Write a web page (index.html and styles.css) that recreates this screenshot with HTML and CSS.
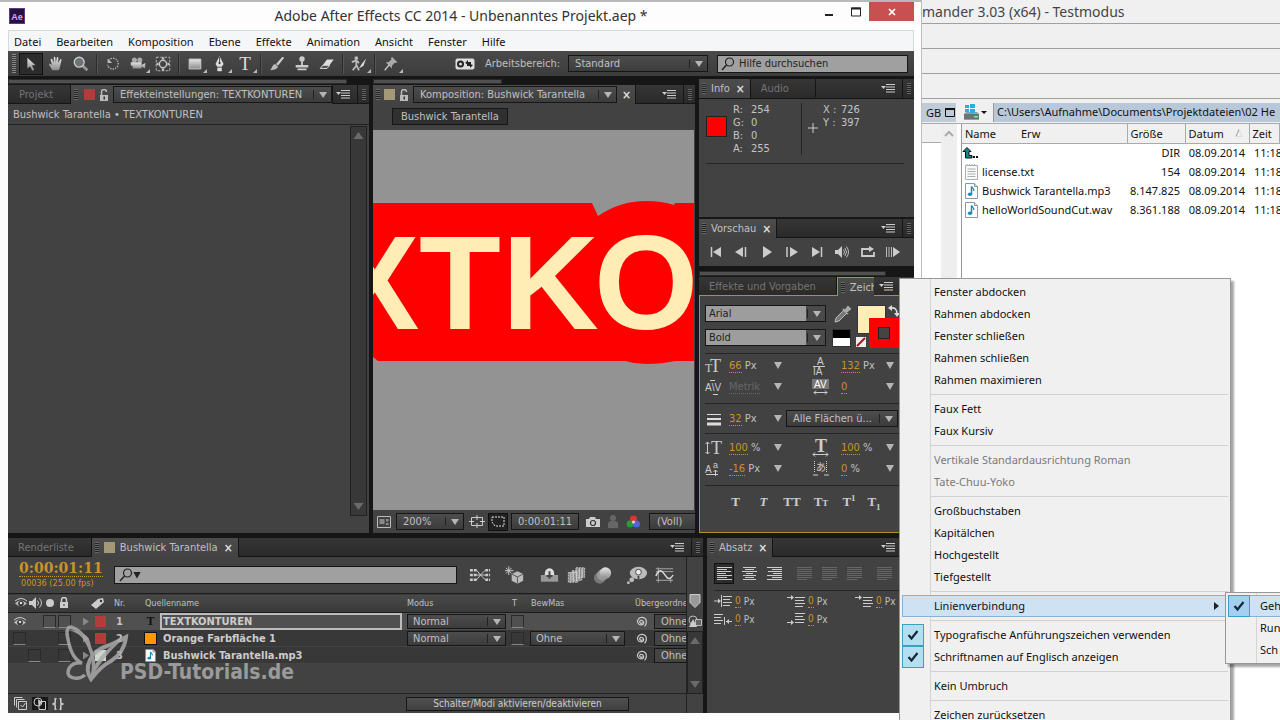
FILE: index.html
```html
<!DOCTYPE html>
<html lang="de">
<head>
<meta charset="utf-8">
<title>Adobe After Effects CC 2014 - Unbenanntes Projekt.aep *</title>
<link rel="stylesheet" href="styles.css">
</head>
<body>
<svg class="defs" aria-hidden="true">
  <defs>
    <linearGradient id="metal" x1="0" y1="0" x2="0" y2="1"><stop offset="0" stop-color="#e6e6e6"/><stop offset="1" stop-color="#8c8c8c"/></linearGradient>
    <symbol id="menu" viewBox="0 0 14 9"><path d="M0 2h5L2.500 5z" fill="#ccc"/><path d="M5 .5h9M5 3h9M5 5.500h9M5 8h9" stroke="#ccc"/></symbol>
    <symbol id="lock" viewBox="0 0 10 12"><path d="M2.500 6V3a2.500 2.500 0 0 1 5 0" fill="none" stroke="#bbb" stroke-width="1.500"/><path d="M1 6h8v6H1z" fill="#bbb"/><path d="M4.500 7.500h1.500v3H4.500z" fill="#333"/></symbol>
    <symbol id="lens" viewBox="0 0 14 14"><circle cx="8.500" cy="5" r="4" fill="none" stroke="#222" stroke-width="1.200"/><path d="M5.500 8L1 13" stroke="#222" stroke-width="1.500"/></symbol>
    <symbol id="spiral" viewBox="0 0 12 12"><path d="M6.500 6.500a1.500 1.500 0 1 1-1-2.200c2.500 0 3 4.200.5 4.400C1.500 9.500.5 5 2.500 2.800 4.500.5 9 .8 10 3.800c.8 2.800-.2 5.200-1.500 6.500" fill="none" stroke="#ccc" stroke-width="1.200"/></symbol>
    <symbol id="eye" viewBox="0 0 14 10"><path d="M1 5.500Q6-.5 13 5.500 7 11 1 5.500z" fill="#bbb"/><circle cx="7" cy="5.500" r="2.800" fill="#333"/><circle cx="7" cy="5" r="1.300" fill="#ddd"/><path d="M1 3Q7-2 13 3" fill="none" stroke="#ccc"/></symbol>
    <symbol id="note" viewBox="0 0 13 16"><path d="M.5.500h9l3 3v12H.5z" fill="#fff" stroke="#8a98a2"/><path d="M9.500.5v3h3" fill="#ddd" stroke="#8a98a2"/><path d="M6.500 3.500v7.500" stroke="#168ac0" stroke-width="1.500"/><ellipse cx="5" cy="11.300" rx="2.200" ry="1.700" fill="#168ac0"/><path d="M6.500 3.500c.5 2 3 2 2.200 4.500" fill="none" stroke="#168ac0" stroke-width="1.300"/></symbol>
    <symbol id="check" viewBox="0 0 12 12"><path d="M1.500 6l3 3.500L10.500 2" fill="none" stroke="#16283a" stroke-width="2.200"/></symbol>
    <symbol id="al" viewBox="0 0 15 14"><path d="M0 .5h15M0 2.500h10M0 4.500h14M0 6.500h9M0 8.500h15M0 10.500h10M0 12.500h15" stroke="currentColor"/></symbol>
    <symbol id="ac" viewBox="0 0 15 14"><path d="M1 .5h13M3 2.500h9M0 4.500h15M4 6.500h7M1 8.500h13M3 10.500h9M1 12.500h13" stroke="currentColor"/></symbol>
    <symbol id="ar" viewBox="0 0 15 14"><path d="M0 .5h15M5 2.500h10M1 4.500h14M6 6.500h9M0 8.500h15M5 10.500h10M0 12.500h15" stroke="currentColor"/></symbol>
    <symbol id="aj" viewBox="0 0 15 14"><path d="M0 .5h15M0 2.500h15M0 4.500h15M0 6.500h15M0 8.500h15M0 10.500h15M0 12.500h10" stroke="currentColor"/></symbol>
    <symbol id="indent" viewBox="0 0 18 12"><path d="M0 6h6M7.500 0v12M9 1.500h9M9 4.500h7M9 7.500h9M9 10.500h7" stroke="#ccc"/><path d="M4 3.500L7 6 4 8.500z" fill="#ccc"/></symbol>
    <symbol id="indent2" viewBox="0 0 18 12"><path d="M0 2.500h5M8 2.500h10M8 5.500h9M8 8.500h10M8 11.500h8" stroke="#ccc"/><path d="M4 0l3 2.500L4 5z" fill="#ccc"/></symbol>
  </defs>
</svg>

<div class="desktop">
<main class="ae">
  <header class="ae-title">
    <svg class="ae-logo" viewBox="0 0 16 16"><rect x=".5" y=".5" width="15" height="15" fill="#27123f" stroke="#5b3a83"/><text x="8" y="11.500" text-anchor="middle">Ae</text></svg>
    <h1>Adobe After Effects CC 2014 - Unbenanntes Projekt.aep *</h1>
    <div class="caption">
      <button aria-label="Minimieren"><svg viewBox="0 0 12 12"><path d="M2 9h8" stroke="#222" stroke-width="2"/></svg></button>
      <button aria-label="Maximieren"><svg viewBox="0 0 12 12"><path d="M1.500 2v8h9V2z" fill="none" stroke="#222"/><path d="M1 2.500h10" stroke="#222" stroke-width="2"/></svg></button>
      <button class="close" aria-label="Schließen"><svg viewBox="0 0 12 12"><path d="M3 3l6 6M9 3L3 9" stroke="#fff" stroke-width="1.700"/></svg></button>
    </div>
  </header>
  <nav class="menubar">
    <button>Datei</button><button>Bearbeiten</button><button>Komposition</button><button>Ebene</button><button>Effekte</button><button>Animation</button><button>Ansicht</button><button>Fenster</button><button>Hilfe</button>
  </nav>
  <div class="app">
    <div class="toolbar">
      <i class="grip tall"></i>
      <button class="tool on" aria-label="Auswahl"><svg viewBox="0 0 20 20"><path d="M6 3v12l3-2.500 2.500 5 2-1-2.500-5h4z" fill="url(#metal)"/></svg></button>
      <button class="tool" aria-label="Hand"><svg viewBox="0 0 20 20"><path d="M6 17C4 13 2 11 2.500 10s2 0 3 1.500L4 5c0-1 1.500-1 2 0l1.500 4L7.500 3c0-1.300 1.700-1.300 1.800 0l.5 6 1-6c.2-1.200 1.900-1 1.800.2L12.300 9l2.200-4c.6-1 2-.3 1.600.8C15 9 15 14 13 17z" fill="url(#metal)"/></svg></button>
      <button class="tool" aria-label="Zoom"><svg viewBox="0 0 20 20"><path d="M11 11l6 6" stroke="#999" stroke-width="3"/><circle cx="8" cy="8" r="5.500" fill="#6d7478" stroke="#ccc" stroke-width="1.500"/></svg></button>
      <i class="tsep"></i>
      <button class="tool" aria-label="Drehen"><svg viewBox="0 0 20 20"><path d="M5 6a6 6 0 1 1-1 5" fill="none" stroke="#bbb" stroke-width="1.500" stroke-dasharray="1.500 1.300"/><path d="M4 4v5h5z" fill="#bbb"/></svg></button>
      <button class="tool more" aria-label="Kamera"><svg viewBox="0 0 20 20"><circle cx="6" cy="5.500" r="2.800" fill="#aaa"/><circle cx="12" cy="5.500" r="2.800" fill="#aaa"/><path d="M2 8h12v7H4v-3H2zM14 11l4-2v6l-4-2z" fill="url(#metal)"/></svg></button>
      <button class="tool" aria-label="Ausschnitt"><svg viewBox="0 0 20 20"><circle cx="10" cy="10" r="4" fill="none" stroke="#ccc" stroke-width="1.500"/><path d="M2.500 2.500h15v15h-15z" fill="none" stroke="#bbb" stroke-dasharray="3 1.500"/><path d="M10 2l2 3H8zM10 18l2-3H8zM2 10l3-2v4zM18 10l-3-2v4z" fill="#ccc"/></svg></button>
      <i class="tsep"></i>
      <button class="tool more" aria-label="Rechteck"><svg viewBox="0 0 20 20"><path d="M3.500 4.500h13v11h-13z" fill="url(#metal)" stroke="#ccc"/></svg></button>
      <button class="tool more" aria-label="Zeichenstift"><svg viewBox="0 0 20 20"><path d="M9.500 1L14 10l-2 3H7l-2-3z" fill="#ddd"/><path d="M9.500 2v7" stroke="#444"/><circle cx="9.500" cy="9" r="1.200" fill="#333"/><path d="M7 14h5v4H7z" fill="#ddd"/></svg></button>
      <button class="tool more glyph" aria-label="Text">T</button>
      <i class="tsep"></i>
      <button class="tool" aria-label="Pinsel"><svg viewBox="0 0 20 20"><path d="M16 2l-7 8 2 2 7-9z" fill="#ccc"/><path d="M8 10l3 3c-2 4-5 3-9 4 3-2 2-6 6-7z" fill="#bbb"/></svg></button>
      <button class="tool" aria-label="Stempel"><svg viewBox="0 0 20 20"><circle cx="10" cy="4.500" r="3" fill="#ccc"/><path d="M9 7h2v4h6v3H3v-3h6zM5 15h10v2H5z" fill="#ccc"/></svg></button>
      <button class="tool" aria-label="Radiergummi"><svg viewBox="0 0 20 20"><path d="M10 5h7.500l-7.500 10H2.500z" fill="#ddd"/><path d="M2.500 15l2.800-3.500H13L10 15z" fill="#555" stroke="#ddd"/></svg></button>
      <i class="tsep"></i>
      <button class="tool more" aria-label="Roto-Pinsel"><svg viewBox="0 0 20 20"><circle cx="7" cy="3.500" r="2" fill="#bbb"/><path d="M2 8l5-2 3 3M7 6v6l-4 5M7 11l3 6" fill="none" stroke="#bbb" stroke-width="2"/><path d="M18 4l-5 6-3 5 5-3z" fill="#ddd"/></svg></button>
      <i class="tsep gap"></i>
      <button class="tool more" aria-label="Marionette"><svg viewBox="0 0 20 20"><path d="M11 2l6 6-2 1-1-.5-3 3.500 0 3-7-7h3L10.500 5 10 4z" fill="#aaa"/><path d="M8 11l-5 6" stroke="#ccc" stroke-width="1.500"/></svg></button>
      <span class="ws">
        <svg viewBox="0 0 20 12" width="20" height="12"><rect x=".5" y=".5" width="19" height="11" rx="2" fill="#ddd"/><circle cx="5.500" cy="6" r="2.500" fill="none" stroke="#222" stroke-width="2"/><path d="M10 5l3-3v2h3v4M18 7l-3 3V8h-3V5" fill="#222"/></svg>
        <label for="ws">Arbeitsbereich:</label>
      </span>
      <span class="sel wsel"><select id="ws"><option>Standard</option></select></span>
      <label class="help"><svg width="14" height="14"><use href="#lens"/></svg><input type="text" value="Hilfe durchsuchen" aria-label="Hilfe durchsuchen"></label>
    </div>

    <div class="upper">
      <section class="col">
        <div class="hbar"><i class="thumb left-thumb"></i></div>
        <div class="tabs">
          <button class="tab off proj">Projekt</button>
          <div class="tab act fx"><i class="grip"></i><i class="chip red"></i><svg width="10" height="12"><use href="#lock"/></svg><span class="sel bare"><select aria-label="Effekteinstellungen"><option>Effekteinstellungen: TEXTKONTUREN</option></select></span></div>
          <span class="tabend"><svg width="14" height="9"><use href="#menu"/></svg></span><span class="endgrip"><i class="grip"></i></span>
        </div>
        <div class="pbody fxbody">
          <p class="crumb">Bushwick Tarantella • TEXTKONTUREN</p>
          <div class="fxarea"><div class="scroll"><i class="tri up"></i><i class="tri"></i></div></div>
        </div>
      </section>

      <section class="col">
        <div class="hbar"><i class="thumb comp-thumb"></i></div>
        <div class="tabs">
          <div class="tab act compt"><i class="grip"></i><i class="chip sand"></i><svg width="10" height="12"><use href="#lock"/></svg><span class="sel bare"><select aria-label="Komposition"><option>Komposition: Bushwick Tarantella</option></select></span><b class="x">×</b></div>
          <span class="tabend"><svg width="14" height="9"><use href="#menu"/></svg></span><span class="endgrip"><i class="grip"></i></span>
        </div>
        <div class="pbody">
          <div class="compcrumb"><button>Bushwick Tarantella</button></div>
          <div class="viewer">
            <svg viewBox="0 0 321 380" preserveAspectRatio="xMidYMid slice">
              <path d="M0 73H219L225 86Q247 71 273 71Q289 71 301 75L302 73H330V231H302Q289 234 273 234Q262 234 252 231H5L0 227z" fill="#fe0000"/>
              <text x="-43 46 129 221" y="199">XTKO</text>
            </svg>
          </div>
          <div class="vfoot">
            <svg width="14" height="12" viewBox="0 0 14 12"><path d="M.5.500h13v11H.5z" fill="none" stroke="#bbb"/><path d="M2.500 3h5v5h-5zM9 3h2.500v2.500H9zM9 7h2.500v2H9z" fill="#888"/></svg>
            <span class="sel zoomsel"><select aria-label="Zoom"><option>200%</option></select></span>
            <svg width="16" height="14" viewBox="0 0 16 14"><path d="M2.500 2.500h11v8h-11zM8 0v5M8 8v5M0 6.500h5M11 6.500h5" fill="none" stroke="#ccc"/></svg>
            <button class="maskbtn" aria-label="Maske"><svg width="14" height="11" viewBox="0 0 14 11"><path d="M1 1h12v9H4L1 6z" fill="none" stroke="#ddd" stroke-dasharray="2 1"/></svg></button>
            <button class="box time">0:00:01:11</button>
            <svg width="14" height="12" viewBox="0 0 14 12"><path d="M0 3h3l1-2h5l1 2h4v8H0z" fill="#ccc"/><circle cx="7" cy="7" r="2.500" fill="#ccc" stroke="#333" stroke-width="1.200"/></svg>
            <svg width="12" height="13" viewBox="0 0 12 13"><circle cx="6" cy="3" r="3" fill="#666"/><path d="M1 13V8l2-2h6l2 2v5z" fill="#666"/></svg>
            <svg width="16" height="14" viewBox="0 0 16 14"><circle cx="7.500" cy="4" r="3.500" fill="#d33"/><circle cx="4" cy="9" r="3.500" fill="#2a9a3a"/><circle cx="10.500" cy="9" r="3.500" fill="#5564d8"/><circle cx="7.500" cy="7" r="1.500" fill="#ddd"/></svg>
            <button class="box voll">(Voll)</button>
          </div>
        </div>
      </section>

      <section class="col right">
        <div class="tabs info-tabs">
          <div class="tab act"><i class="grip"></i>Info<b class="x">×</b></div>
          <button class="tab off audio">Audio</button>
          <span class="tabend"><svg width="14" height="9"><use href="#menu"/></svg></span><span class="endgrip"><i class="grip"></i></span>
        </div>
        <div class="pbody info">
          <div class="inforow">
            <i class="colour"></i>
            <dl><dt>R:</dt><dd>254</dd><dt>G:</dt><dd>0</dd><dt>B:</dt><dd>0</dd><dt>A:</dt><dd>255</dd></dl>
            <div class="xy"><svg width="10" height="10" viewBox="0 0 10 10"><path d="M5 0v10M0 5h10" stroke="#ccc"/></svg><dl><dt>X :</dt><dd>726</dd><dt>Y :</dt><dd>397</dd></dl></div>
          </div>
        </div>
        <div class="tabs prev-tabs">
          <div class="tab act"><i class="grip"></i>Vorschau<b class="x">×</b></div>
          <span class="tabend"><svg width="14" height="9"><use href="#menu"/></svg></span><span class="endgrip"><i class="grip"></i></span>
        </div>
        <div class="pbody preview">
          <button aria-label="Erstes Bild"><svg viewBox="0 0 16 12"><path d="M3.500 1v10" stroke="#ccc" stroke-width="1.500"/><path d="M13 1v10L5 6z" fill="#ccc"/></svg></button>
          <button aria-label="Zurück"><svg viewBox="0 0 16 12"><path d="M10 1v10L2 6z" fill="#ccc"/><path d="M12.500 1v10" stroke="#ccc" stroke-width="1.500"/></svg></button>
          <button aria-label="Abspielen"><svg viewBox="0 0 16 12"><path d="M4 0l9 6-9 6z" fill="#ccc"/></svg></button>
          <button aria-label="Vor"><svg viewBox="0 0 16 12"><path d="M3 1v10" stroke="#ccc" stroke-width="1.500"/><path d="M6 1v10l8-5z" fill="#ccc"/></svg></button>
          <button aria-label="Letztes Bild"><svg viewBox="0 0 16 12"><path d="M3 1v10l8-5z" fill="#ccc"/><path d="M12.500 1v10" stroke="#ccc" stroke-width="1.500"/></svg></button>
          <button aria-label="Ton"><svg viewBox="0 0 16 12"><path d="M1 4h3l4-4v12L4 8H1z" fill="#ccc"/><path d="M9.500 3.500q2 2.500 0 5M11 2q3 4 0 8M12.500.5q4 5.500 0 11" fill="none" stroke="#bbb"/></svg></button>
          <button aria-label="Schleife"><svg viewBox="0 0 16 12"><path d="M10 3H2v7h12V6" fill="none" stroke="#ccc" stroke-width="1.800"/><path d="M9 0l5 3-5 3z" fill="#ccc"/></svg></button>
          <button aria-label="RAM-Vorschau"><svg viewBox="0 0 16 12"><path d="M1.500 1v10M4 1v10M6.500 1v10" stroke="#bbb"/><path d="M8 1v10l7-5z" fill="#ccc"/></svg></button>
        </div>
        <div class="hbar low"><i class="thumb char-thumb"></i></div>
        <div class="tabs char-tabs">
          <button class="tab off">Effekte und Vorgaben</button>
          <div class="tab act gold"><i class="grip"></i>Zeich</div>
          <span class="tabend"><svg width="14" height="9"><use href="#menu"/></svg></span>
        </div>
        <div class="pbody char">
          <div class="fontrow">
            <div class="fonts">
              <span class="sel light"><select aria-label="Schriftart"><option>Arial</option></select></span>
              <span class="sel light"><select aria-label="Schriftschnitt"><option>Bold</option></select></span>
            </div>
            <div class="pick">
              <svg width="18" height="18" viewBox="0 0 18 18"><path d="M11 5l3 3-8 8-4 1 1-4z" fill="#777" stroke="#bbb"/><path d="M10 4l5 5M12 6l3-4 2 2-4 3z" fill="#aaa" stroke="#aaa" stroke-width="2"/></svg>
              <i class="bw"></i>
            </div>
            <div class="swatches"><i class="cream"></i><i class="stroke"></i>
              <svg class="swap" width="12" height="12" viewBox="0 0 12 12"><path d="M3 3q6-1 6 6" fill="none" stroke="#ddd" stroke-width="1.500"/><path d="M4 0v6L0 3zM6 8h6l-3 4z" fill="#ddd"/></svg>
              <svg class="none" width="10" height="10" viewBox="0 0 10 10"><path d="M0 0h10v10H0z" fill="#eee"/><path d="M1 9l8-8" stroke="#a01818" stroke-width="2"/></svg></div>
          </div>
          <div class="metrics two first">
            <svg viewBox="0 0 18 16"><text x="0" y="14" class="ser s12">T</text><text x="5" y="14" class="ser s16">T</text></svg><span><button class="hot">66</button> Px</span><i class="tri"></i>
            <svg viewBox="0 0 18 16"><text x="5" y="7" class="ic s10">A</text><text x="1" y="17" class="ic s10">IA</text><path d="M1 8.500h12" stroke="#ccc"/></svg><span><button class="hot">132</button> Px</span><i class="tri"></i>
            <svg viewBox="0 0 18 16"><text x="0" y="12" class="ic s10">A\V</text><path d="M5 1.500h5M8 15.500h5" stroke="#ccc"/></svg><span><button class="hot dim">Metrik</button></span><i class="tri"></i>
            <svg viewBox="0 0 18 16"><path d="M0 0h17v10H0z" fill="#777"/><text x="2" y="9" class="ic s10 lt">AV</text><path d="M2 13.500h13M4 11.500l-2 2 2 2M13 11.500l2 2-2 2" stroke="#ccc" fill="none"/></svg><span><button class="hot">0</button></span><i class="tri"></i>
          </div>
          <div class="metrics one">
            <svg viewBox="0 0 18 16"><path d="M2 3.500h14" stroke="#ddd"/><path d="M2 8h14" stroke="#ddd" stroke-width="2"/><path d="M2 13h14" stroke="#ddd" stroke-width="3"/></svg><span><button class="hot">32</button> Px</span><i class="tri"></i>
            <span class="sel fill"><select aria-label="Füllung"><option>Alle Flächen ü...</option></select></span>
          </div>
          <div class="metrics two">
            <svg viewBox="0 0 18 16"><path d="M2.500 2v12M.5 4l2-2 2 2M.5 12l2 2 2-2" stroke="#ccc" fill="none"/><text x="6" y="14" class="ser s16">T</text></svg><span><button class="hot">100</button> %</span><i class="tri"></i>
            <svg viewBox="0 0 18 16"><text x="3" y="12" class="ser s16 bold">T</text><path d="M1 14.500h15M3 12.500l-2 2 2 2M14 12.500l2 2-2 2" stroke="#ccc" fill="none"/></svg><span><button class="hot">100</button> %</span><i class="tri"></i>
            <svg viewBox="0 0 18 16"><text x="0" y="12" class="ic s10">A</text><text x="8" y="7" class="ic s9">a</text><path d="M1 13.500h12M10.500 15V9M8.500 11l2-2 2 2" stroke="#ccc" fill="none"/></svg><span><button class="hot">-16</button> Px</span><i class="tri"></i>
            <svg viewBox="0 0 18 16"><path d="M2.500 0v12M14.500 0v12" stroke="#ccc" stroke-dasharray="1 1"/><text x="4" y="10" class="jp">あ</text><path d="M1 14h5M12 14h5" stroke="#ccc"/></svg><span><button class="hot">0</button> %</span><i class="tri"></i>
          </div>
          <div class="styles"><button><b>T</b></button><button><i>T</i></button><button>TT</button><button>T<small>T</small></button><button>T<sup>1</sup></button><button>T<sub>1</sub></button></div>
        </div>
      </section>
    </div>

    <div class="lower">
      <section class="col timeline">
        <div class="tabs">
          <button class="tab off rl">Renderliste</button>
          <div class="tab act"><i class="grip"></i><i class="chip sand"></i>Bushwick Tarantella<b class="x">×</b></div>
          <span class="tabend"><svg width="14" height="9"><use href="#menu"/></svg></span><span class="endgrip"><i class="grip"></i></span>
        </div>
        <div class="pbody tl">
          <div class="tlmain">
            <div class="tlhead">
              <div class="tc"><button class="big">0:00:01:11</button><small>00036 (25.00 fps)</small></div>
              <label class="search"><svg width="14" height="14"><use href="#lens"/></svg><i class="tri"></i><input type="text" aria-label="Suchen"></label>
              <div class="tlicons">
                <svg viewBox="0 0 24 18"><path d="M1 4h7M1 9h7M1 14h7M17 4h5M17 9h5M17 14h5" stroke="#ccc" stroke-width="2.500" stroke-dasharray="3 1"/><path d="M8 4l4 5 5-5M8 14l4-5 5 5M8 9h9" stroke="#ccc" fill="none"/></svg>
                <svg viewBox="0 0 24 18"><path d="M5 0v9M1 4.500h9M2 1.500l6 6M8 1.500l-6 6" stroke="#ccc"/><path d="M8 8l6-3 6 3v7l-6 3-6-3z" fill="#bbb"/><path d="M8 8l6 3 6-3M14 11v7" stroke="#555" fill="none"/></svg>
                <svg class="wide" viewBox="0 0 24 18"><path d="M3 9h18v7H3z" fill="#999"/><path d="M7 9q0-7 5-7t5 7z" fill="#ddd"/><path d="M12 5v8M9 10h6" stroke="#444" stroke-width="2"/></svg>
                <svg viewBox="0 0 24 18"><path d="M3.500 6.500h10v10h-10zM7.500 4.500h10v10h-10zM11.500 1.500h9v10h-9z" fill="#888" stroke="#ccc" stroke-dasharray="2 1"/><path d="M6 6v11M9 5v11M12 5v10M15 2v11M18 2v9" stroke="#ccc"/></svg>
                <svg viewBox="0 0 24 18"><circle cx="8" cy="12" r="6" fill="#777"/><circle cx="11" cy="9" r="6" fill="#999"/><circle cx="14" cy="7" r="6" fill="url(#metal)"/></svg>
                <svg class="wide" viewBox="0 0 24 18"><ellipse cx="13" cy="7" rx="9" ry="6.500" fill="#bbb"/><circle cx="6" cy="14" r="2.500" fill="#bbb"/><circle cx="2.500" cy="17" r="1.500" fill="#bbb"/><circle cx="13" cy="6" r="3" fill="#eee" stroke="#444"/><path d="M12 10h2v3h-2z" fill="#444"/></svg>
                <svg viewBox="0 0 24 18"><path d="M3 2.500h18M3 5.500h18M3 14.500h18M5.500 1v16M18.500 12v5" stroke="#aaa"/><path d="M3 10q4-9 8-3l4 5q3 2 6-3" fill="none" stroke="#ddd" stroke-width="1.500"/></svg>
              </div>
            </div>
            <table class="layers">
              <colgroup><col class="c-sw"><col class="c-lab"><col class="c-nr"><col><col class="c-mode"><col class="c-t"><col class="c-mas"><col class="c-par"></colgroup>
              <thead><tr>
                <th><span class="sw"><svg width="14" height="10"><use href="#eye"/></svg><svg width="14" height="12" viewBox="0 0 14 12"><path d="M0 4h3l4-4v12L3 8H0z" fill="#ccc"/><path d="M8.500 3.500q2 2.500 0 5M10.500 1.500q4 4.500 0 9" fill="none" stroke="#ccc"/></svg><svg width="12" height="10" viewBox="0 0 12 10"><circle cx="6" cy="5" r="4" fill="#ccc"/></svg><svg width="10" height="12" viewBox="0 0 10 12"><path d="M2.500 6V3a2.500 2.500 0 0 1 5 0v3" fill="none" stroke="#ccc" stroke-width="1.500"/><path d="M1 5h8v6H1z" fill="#ccc"/><path d="M4.500 7h1v2h-1z" fill="#333"/></svg></span></th>
                <th><svg class="tag" width="15" height="13" viewBox="0 0 15 13"><path d="M1 8l7-6 5-1 1 4-8 7z" fill="#ccc"/><circle cx="11" cy="4" r="1.200" fill="#333"/></svg></th>
                <th>Nr.</th><th>Quellenname</th><th>Modus</th><th>T</th><th>BewMas</th><th>Übergeordnet</th>
              </tr></thead>
              <tbody>
                <tr class="seld">
                  <td><span class="sw"><svg width="14" height="10"><use href="#eye"/></svg><i></i><i class="cell"></i><i class="cell"></i></span></td>
                  <td><span class="lab"><i class="tri rt"></i><i class="chip red"></i></span></td><td>1</td>
                  <td><span class="name"><b class="tt">T</b><span class="nm edit">TEXTKONTUREN</span></span></td>
                  <td><span class="sel"><select aria-label="Modus 1"><option>Normal</option></select></span></td><td><i class="cell"></i></td><td></td>
                  <td><span class="par"><svg width="12" height="12"><use href="#spiral"/></svg><span class="ohne">Ohne</span></span></td>
                </tr>
                <tr>
                  <td><span class="sw"><i class="cell"></i><i></i><i></i><i class="cell"></i></span></td>
                  <td><span class="lab"><i class="tri rt"></i><i class="chip red"></i></span></td><td>2</td>
                  <td><span class="name"><i class="orange"></i><span class="nm">Orange Farbfläche 1</span></span></td>
                  <td><span class="sel"><select aria-label="Modus 2"><option>Normal</option></select></span></td><td><i class="cell"></i></td><td><span class="sel mas"><select aria-label="BewMas 2"><option>Ohne</option></select></span></td>
                  <td><span class="par"><svg width="12" height="12"><use href="#spiral"/></svg><span class="ohne">Ohne</span></span></td>
                </tr>
                <tr>
                  <td><span class="sw"><i></i><i class="cell"></i><i></i><i class="cell"></i></span></td>
                  <td><span class="lab"><i class="tri rt"></i><i class="chip pale"></i></span></td><td>3</td>
                  <td><span class="name"><svg width="12" height="13"><use href="#note"/></svg><span class="nm">Bushwick Tarantella.mp3</span></span></td>
                  <td></td><td></td><td></td>
                  <td><span class="par"><svg width="12" height="12"><use href="#spiral"/></svg><span class="ohne">Ohne</span></span></td>
                </tr>
              </tbody>
            </table>
            <div class="tlfoot">
              <svg width="14" height="13" viewBox="0 0 14 13"><path d="M.5 8.500v-8h8M2.500 10.500v-8h8" fill="none" stroke="#ccc"/><path d="M4.500 4.500h8v8h-8z" fill="none" stroke="#ccc"/><path d="M6.500 8l2 2 3-4" fill="none" stroke="#ccc"/></svg>
              <span class="darkbox"><svg width="14" height="13" viewBox="0 0 14 13"><circle cx="5" cy="5" r="4" fill="none" stroke="#ccc"/><path d="M6 4.500h6.500v8H6z" fill="none" stroke="#ccc"/><path d="M5 2l4 3-3 4z" fill="#ccc"/></svg></span>
              <svg width="12" height="12" viewBox="0 0 12 12"><path d="M4.500.8H3.200V5L1 6l2.200 1v4.200h1.300M7.500.8h1.300V5L11 6 8.800 7v4.200H7.500" fill="none" stroke="#ccc" stroke-width="1.500"/></svg>
              <button class="toggle">Schalter/Modi aktivieren/deaktivieren</button>
            </div>
          </div>
          <div class="tlside">
            <svg width="12" height="14" viewBox="0 0 12 14"><path d="M1 .5h10v8L6 13.500 1 8.500z" fill="#999" stroke="#ccc"/></svg>
            <svg class="shp" width="14" height="13" viewBox="0 0 14 13"><circle cx="5" cy="5" r="4" fill="none" stroke="#bbb"/><path d="M7.500 4.500h6v6h-6z" fill="#666" stroke="#bbb"/><path d="M5 4l4 8H1z" fill="#ccc"/></svg>
            <div class="scroll"><i class="tri up"></i><i class="tri"></i></div>
          </div>
          <div class="mark">
            <svg width="64" height="58" viewBox="0 0 64 58"><path d="M27 52C33 32 20 6 6 2 2 2 1 7 3 14c2 12 7 21 14 24-9-1-14 4-14 10 1 6 11 7 17 2" fill="none" stroke="#aaa" stroke-width="3.500"/><path d="M3 5Q21 9 25 28 30 6 3 5z" fill="#aaa"/><path d="M26 54c-8-12 0-28 16-33 8-3 13-6 19-9-1 10-7 19-15 24-8 4-13 9-20 18z" fill="none" stroke="#aaa" stroke-width="4"/><path d="M25 55C28 38 38 24 58 14 42 28 34 40 25 55z" fill="#aaa"/></svg>
            <span>PSD-Tutorials.de</span>
          </div>
        </div>
      </section>
      <section class="col">
        <div class="tabs">
          <div class="tab act"><i class="grip"></i>Absatz<b class="x">×</b></div>
          <span class="tabend"><svg width="14" height="9"><use href="#menu"/></svg></span><span class="endgrip"></span>
        </div>
        <div class="pbody absatz">
          <div class="aligns">
            <button class="on" aria-label="Linksbündig"><svg><use href="#al"/></svg></button><button aria-label="Zentriert"><svg><use href="#ac"/></svg></button><button aria-label="Rechtsbündig"><svg><use href="#ar"/></svg></button>
            <button class="dis sp" disabled aria-label="Blocksatz links"><svg><use href="#aj"/></svg></button><button class="dis" disabled aria-label="Blocksatz mittig"><svg><use href="#aj"/></svg></button><button class="dis" disabled aria-label="Blocksatz rechts"><svg><use href="#aj"/></svg></button><button class="dis sp" disabled aria-label="Blocksatz"><svg><use href="#aj"/></svg></button>
          </div>
          <div class="indents">
            <span><svg><use href="#indent"/></svg><button class="hot">0</button> Px</span><span><svg><use href="#indent2"/></svg><button class="hot">0</button> Px</span><span><svg><use href="#indent2"/></svg><button class="hot">0</button> Px</span>
            <span><svg viewBox="0 0 18 12"><path d="M0 1.500h9M0 4.500h7M0 7.500h9M0 10.500h7M10.500 4v8M12 8.500h6" stroke="#ccc"/><path d="M15 6v5l-3-2.500z" fill="#ccc"/></svg><button class="hot">0</button> Px</span><span><svg viewBox="0 0 18 12"><path d="M8 .5h10M8 3.500h8M8 6.500h10M0 9.500h5M8 9.500h9" stroke="#ccc"/><path d="M4 7l3 2.500L4 12z" fill="#ccc"/></svg><button class="hot">0</button> Px</span>
          </div>
        </div>
      </section>
    </div>
  </div>
</main>

<aside class="cmd">
  <h2>mander 3.03 (x64) - Testmodus</h2>
  <div class="bar"></div><div class="bar"></div><div class="bar"></div>
  <div class="paths">
    <span class="gb">GB <svg width="10" height="9" viewBox="0 0 10 9"><path d="M.5.500h9v8h-9z" fill="none" stroke="#111"/><path d="M0 1h10" stroke="#111" stroke-width="2"/></svg></span>
    <button class="drive" aria-label="Laufwerk"><svg width="24" height="17" viewBox="0 0 24 17"><path d="M1 10l2-2h11l2 2v6H1z" fill="#8fa0a8"/><path d="M1 10h15v5H1z" fill="#65767e"/><path d="M11 12h4v1.500h-4z" fill="#6f6"/><path d="M2 1h4v3H2zM7 0h5v4H7zM2 5h4v3H2zM7 5h5v4H7z" fill="#1db4dd"/><path d="M18 7h6l-3 3z" fill="#111"/></svg></button>
    <span class="path">C:\Users\Aufnahme\Documents\Projektdateien\02 He</span>
  </div>
  <div class="lists">
    <div class="lhead"></div>
    <div class="lscroll"><svg width="10" height="7" viewBox="0 0 10 7"><path d="M1 6l4-4 4 4" fill="none" stroke="#aaa" stroke-width="2"/></svg></div>
    <div class="files">
      <table>
        <colgroup><col class="f-name"><col class="f-size"><col class="f-date"><col class="f-time"></colgroup>
        <thead><tr><th><span class="erw"><span>Name</span><span>Erw</span></span></th><th>Größe</th><th><span class="sorted">Datum <svg width="8" height="8" viewBox="0 0 8 8"><path d="M1 7.500l3-7" stroke="#999"/><path d="M4 .5l3 7H1" fill="none" stroke="#ddd"/></svg></span></th><th>Zeit</th></tr></thead>
        <tbody>
          <tr><td><span class="fn up"><svg width="16" height="12" viewBox="0 0 16 12"><path d="M5 .5l4 4H7v4h3v2.500H3.500V4.500H1z" fill="#0a8a8a" stroke="#111"/><path d="M11 9h2v2h-2zM14 9h2v2h-2z" fill="#111"/></svg></span></td><td>DIR</td><td>08.09.2014</td><td>11:18</td></tr>
          <tr><td><span class="fn"><svg width="13" height="16" viewBox="0 0 13 16"><path d="M.5 1.500h12v14H.5z" fill="#fafafa" stroke="#a8aeb0"/><path d="M2 1V0M4.500 1V0M7 1V0M9.500 1V0M2.500 5h8M2.500 7.500h8M2.500 10h8M2.500 12.500h8" stroke="#a8b0b4"/></svg>license.txt</span></td><td>154</td><td>08.09.2014</td><td>11:18</td></tr>
          <tr><td><span class="fn"><svg width="13" height="16"><use href="#note"/></svg>Bushwick Tarantella.mp3</span></td><td>8.147.825</td><td>08.09.2014</td><td>11:18</td></tr>
          <tr><td><span class="fn"><svg width="13" height="16"><use href="#note"/></svg>helloWorldSoundCut.wav</span></td><td>8.361.188</td><td>08.09.2014</td><td>11:18</td></tr>
        </tbody>
      </table>
    </div>
  </div>
</aside>

<div class="popup" role="menu">
  <button>Fenster abdocken</button><button>Rahmen abdocken</button><button>Fenster schließen</button><button>Rahmen schließen</button><button>Rahmen maximieren</button>
  <hr><button>Faux Fett</button><button>Faux Kursiv</button>
  <hr><button disabled>Vertikale Standardausrichtung Roman</button><button disabled>Tate-Chuu-Yoko</button>
  <hr><button>Großbuchstaben</button><button>Kapitälchen</button><button>Hochgestellt</button><button>Tiefgestellt</button>
  <hr><button class="hl">Linienverbindung<i class="tri rt"></i></button>
  <hr><button class="ck"><span class="tick"><svg width="12" height="12"><use href="#check"/></svg></span>Typografische Anführungszeichen verwenden</button><button class="ck"><span class="tick"><svg width="12" height="12"><use href="#check"/></svg></span>Schriftnamen auf Englisch anzeigen</button>
  <hr><button>Kein Umbruch</button>
  <hr><button>Zeichen zurücksetzen</button>
</div>
<div class="popup sub" role="menu">
  <button class="hl ck"><span class="tick"><svg width="12" height="12"><use href="#check"/></svg></span>Geh</button><button>Run</button><button>Sch</button>
</div>
</div>
</body>
</html>
```
FILE: styles.css
```css
* { box-sizing: border-box; }
html, body { margin: 0; height: 100%; }
body { font-family: "Noto Sans", "Open Sans", sans-serif; font-size: 11px; color: #111; overflow: hidden; }
button, input, select { font: inherit; color: inherit; margin: 0; padding: 0; border: 0; background: none; border-radius: 0; }
button { white-space: nowrap; }
select { appearance: none; outline: 0; }
h1, h2, p, dl, dd { margin: 0; font-weight: normal; }
i { font-style: normal; }
svg { display: block; flex: none; }
.defs { position: absolute; width: 0; height: 0; }

.desktop { position: relative; height: 100%; display: grid; grid-template-columns: 922fr 358fr; overflow: hidden; }

/* After Effects window */
.ae { display: flex; flex-direction: column; min-width: 0; min-height: 0; padding: 0 7px 7px 8px; background: #fdfdfe; border-top: 2px solid #b9b9b9; border-right: 1px solid #bdbdbd; }
.ae-title { display: flex; align-items: center; height: 28px; }
.ae-logo { width: 16px; height: 16px; margin-left: 1px; }
.ae-logo text { font: bold 9px "Liberation Sans", sans-serif; fill: #d9a6ff; }
.ae-title h1 { flex: 1; text-align: center; font-size: 14px; line-height: 28px; color: #333; white-space: nowrap; padding-left: 82px; }
.caption { display: flex; align-self: flex-start; }
.caption button { width: 27px; height: 19px; display: grid; place-items: center; }
.caption svg { width: 12px; height: 12px; }
.caption .close { width: 45px; background: #c75050; }
.menubar { display: flex; gap: 15px; height: 21px; padding-left: 5px; background: #f5f6f7; border: 1px solid #d5dadd; border-bottom: 0; }
.menubar button { line-height: 19px; }
.app { flex: 1; min-height: 0; display: flex; flex-direction: column; background: #161616; color: #c0c0c0; font-family: "DejaVu Sans Condensed", "Noto Sans", sans-serif; }

.toolbar { display: flex; align-items: center; gap: 1px; height: 25px; padding: 0 6px 0 4px; background: linear-gradient(#4a4a4a, #3c3c3c); }
.grip { width: 4px; height: 11px; flex: none; background: repeating-linear-gradient(#666 0 1px, #222 1px 2px); }
.grip.tall { height: 19px; margin-right: 2px; background: repeating-linear-gradient(#888 0 1px, #3a3a3a 1px 2px); }
.tool { position: relative; width: 24px; height: 22px; flex: none; display: grid; place-items: center; }
.tool svg { width: 18px; height: 18px; }
.tool.on { background: #2c2c2c; border: 1px solid #111; }
.tool.glyph { font: 19px "Liberation Serif", serif; color: #ddd; }
.tool.more::after { content: ""; position: absolute; right: 0; bottom: 2px; border: 2px solid transparent; border-right-color: #bbb; border-bottom-color: #bbb; }
.tsep { width: 2px; height: 20px; flex: none; margin: 0 2px; background: #2b2b2b; border-right: 1px solid #555; }
.ws { display: flex; align-items: center; gap: 10px; margin-left: 51px; margin-right: 7px; white-space: nowrap; }
.sel { position: relative; display: flex; min-width: 0; }
.sel select { width: 100%; height: 17px; padding: 0 18px 0 6px; border: 1px solid #161616; background: linear-gradient(#4d4d4d, #3c3c3c); color: #c0c0c0; text-overflow: clip; }
.sel::before { content: ""; position: absolute; right: 18px; top: 4px; bottom: 4px; width: 1px; background: #222; z-index: 1; }
.sel::after { content: ""; position: absolute; right: 5px; top: 6px; width: 8px; height: 6px; background: #b5b5b5; clip-path: polygon(0 0, 100% 0, 50% 100%); pointer-events: none; }
.wsel { flex: 1; max-width: 260px; }
.help { display: flex; align-items: center; gap: 4px; flex: 0 0 191px; height: 18px; margin-left: 8px; padding-left: 3px; background: #a0a0a0; border: 1px solid #161616; color: #222; }
.help input, .search input { flex: 1; min-width: 0; outline: 0; }

.upper { flex: 1; min-height: 0; display: grid; grid-template-columns: 361fr 322fr 215fr; gap: 4px; padding-top: 2px; }
.lower { display: grid; grid-template-columns: 695fr 207fr; gap: 4px; height: 175px; margin-top: 5px; }
.col { display: flex; flex-direction: column; min-width: 0; min-height: 0; overflow: hidden; }
.hbar { height: 7px; flex: none; padding-top: 1px; }
.thumb { display: block; height: 5px; background: #505050; border: 1px solid #2a2a2a; }
.left-thumb { width: 94%; } .comp-thumb { width: 40%; } .char-thumb { width: 87%; }
.tabs { display: flex; height: 19px; flex: none; background: linear-gradient(#363636, #2a2a2a); border-bottom: 1px solid #151515; }
.tab { display: flex; align-items: center; gap: 5px; height: 19px; padding: 0 5px 0 3px; white-space: nowrap; }
.tab.off { padding: 0 10px; color: #747474; border-right: 1px solid #151515; height: 18px; }
.tab.act { background: linear-gradient(#4c4c4c, #424242); border-right: 1px solid #151515; }
.tabs .audio { padding-right: 26px; }
.tabs .proj { padding: 0 17px 0 11px; flex: none; }
.tabend { margin-left: auto; display: flex; align-items: center; padding-right: 7px; }
.endgrip { width: 12px; display: flex; align-items: center; justify-content: center; border-left: 1px solid #151515; }
.x { font-size: 12px; line-height: 12px; color: #ddd; font-weight: bold; margin-left: 1px; }
.chip { width: 11px; height: 11px; flex: none; } .chip.red { background: #b23b3b; } .chip.sand { background: #a39878; } .chip.pale { background: #cdd6cd; }
.tabs .fx { flex: 0 1 262px; min-width: 0; overflow: hidden; gap: 4px; padding-right: 0; } .fx .sel { flex: 1; } .fx .chip { margin-left: 2px; }
.tabs .compt { gap: 4px; flex: 0 1 263px; padding-right: 4px; } .compt .sel { flex: 1; }
.pbody { flex: 1; min-height: 0; background: #424242; }
.fxbody { display: flex; flex-direction: column; }
.crumb { height: 21px; line-height: 21px; padding-left: 5px; border-bottom: 1px solid #222; flex: none; }
.fxarea { flex: 1; display: flex; justify-content: flex-end; padding: 1px 2px 17px; }
.scroll { width: 17px; background: #383838; border: 1px solid #222; display: flex; flex-direction: column; justify-content: space-between; align-items: center; padding: 5px 0; }
.tri { width: 8px; height: 7px; flex: none; background: #b5b5b5; clip-path: polygon(0 0, 100% 0, 50% 100%); }
.scroll .tri { width: 10px; background: #6a6a6a; }
.tri.up { clip-path: polygon(0 100%, 100% 100%, 50% 0); }
.tri.rt { width: 6px; height: 8px; background: #888; clip-path: polygon(0 0, 100% 50%, 0 100%); }

.col:nth-child(2) > .pbody { display: flex; flex-direction: column; }
.compcrumb { height: 26px; flex: none; padding: 4px 0 0 19px; }
.compcrumb button { height: 17px; padding: 0 8px; background: #303030; border: 1px solid #161616; }
.viewer { flex: 1; min-height: 0; background: #939393; margin-right: 1px; overflow: hidden; }
.viewer svg { width: 100%; height: 100%; }
.viewer text { font: bold 134px "Liberation Sans", Arial, sans-serif; fill: #ffedb5; }
.vfoot { display: flex; align-items: center; gap: 7px; height: 23px; flex: none; padding-left: 4px; overflow: hidden; }
.vfoot .sel { flex: 0 0 68px; margin: 0 -2px; }
.box { height: 17px; border: 1px solid #161616; background: linear-gradient(#4d4d4d, #3c3c3c); padding: 0 7px; flex: none; }
.maskbtn { height: 18px; width: 20px; margin: 0 -4px; display: grid; place-items: center; background: #222; border: 1px solid #111; flex: none; }
.voll { width: 60px; text-align: left; }
.box.time { padding: 0 6px; }

.info-tabs { margin-top: 1px; height: 20px; }
.info { flex: none; height: 118px; padding: 4px 10px 0 7px; }
.inforow { display: flex; height: 61px; border-bottom: 1px solid #252525; }
.colour { width: 21px; height: 21px; margin: 13px 6px 0 0; background: #fe0000; border: 1px solid #222; }
.info dl { display: grid; grid-template-columns: 18px 50px; line-height: 13px; height: 52px; color: #c4c4c4; }
.xy { display: flex; flex: 1; border-left: 1px solid #252525; height: 52px; padding-left: 6px; }
.xy svg { margin: 20px 5px 0 0; }
.xy dl { height: 26px; grid-template-columns: 18px 30px; }
.prev-tabs { margin-top: 2px; }
.preview { flex: none; height: 28px; display: flex; align-items: center; justify-content: space-between; padding: 0 13px 0 9px; }
.preview svg { width: 16px; height: 12px; }
.low { height: 11px; padding-top: 5px; }
.char-tabs { border-bottom-color: #b08f2c; }
.tabs.char-tabs .off { flex: none; padding-right: 20px; }
.char-tabs .gold { border: 1px solid #b08f2c; border-bottom: 0; border-right: 0; padding-right: 0; width: 37px; overflow: hidden; }
.char-tabs .tabend { margin-left: 5px; }
.char { border: 1px solid #b08f2c; border-top: 0; border-right: 0; padding: 9px 0 0 5px; }
.fontrow { display: flex; height: 49px; border-bottom: 1px solid #262626; }
.fonts { width: 121px; display: grid; gap: 7px; align-content: start; }
.light select { background: linear-gradient(90deg, #9d9d9d 0 100px, #4a4a4a 100px); color: #222; padding-left: 3px; }
.pick { width: 31px; display: grid; gap: 6px; justify-items: center; align-content: start; }
.bw { width: 19px; height: 18px; background: linear-gradient(#000 50%, #fff 50%); border: 1px solid #333; }
.swatches { position: relative; width: 44px; }
.swatches > * { position: absolute; }
.cream { left: 0; top: 0; width: 29px; height: 29px; background: #ffedb5; border: 1px solid #333; }
.stroke { left: 12px; top: 13px; width: 30px; height: 30px; border: 9px solid #fe0000; background: #444; outline: 1px solid #222; outline-offset: -10px; }
.swap { left: 31px; top: 0; } .none { left: -1px; top: 32px; }
.metrics { display: grid; grid-template-columns: 24px 45px 38px 29px 45px 14px; align-items: center; border-bottom: 1px solid #262626; white-space: nowrap; }
.metrics.two { grid-auto-rows: 21px; padding: 3px 0 6px; }
.metrics.first { padding: 1px 0 6px; }
.metrics.one { height: 30px; grid-template-columns: 24px 45px 12px 112px; }
.metrics svg { width: 18px; height: 16px; overflow: visible; }
.ser { font-family: "Liberation Serif", serif; fill: #ccc; } .ic { font-family: "Liberation Sans", sans-serif; fill: #ccc; } .ic.lt { fill: #fff; }
.s9 { font-size: 9px; } .s10 { font-size: 10px; } .s12 { font-size: 12px; } .s16 { font-size: 18px; } .bold { font-weight: bold; } .jp { font: 10px "Noto Sans CJK JP", sans-serif; fill: #ccc; }
.hot { color: #c9922a; line-height: 13px; border-bottom: 1px dotted #c9922a; }
.hot.dim { color: #666; border-color: #666; }
.styles { display: grid; grid-template-columns: 25px 31px 26px 32px 24px 26px; padding: 8px 0 0 18px; font: bold 13px "Liberation Serif", serif; color: #ccc; }
.styles button { height: 16px; line-height: 16px; } .styles i { font-style: italic; } .styles small, .styles sup, .styles sub { font-size: 9px; line-height: 0; }

.timeline .rl { padding-right: 17px; }
.tl { position: relative; display: flex; }
.timeline > .tl { flex-direction: row; }
.tlmain { flex: 1; min-width: 0; display: flex; flex-direction: column; overflow: hidden; }
.tlhead { display: flex; height: 36px; flex: none; align-items: center; }
.tc { width: 106px; padding-left: 11px; color: #c9922a; display: grid; justify-items: start; }
.big { font: bold 14px "DejaVu Serif", "Liberation Serif", serif; line-height: 15px; border-bottom: 1px dotted #c9922a; }
.tc small { font-size: 9px; line-height: 12px; padding-left: 2px; white-space: nowrap; }
.search { display: flex; align-items: center; flex: 1; height: 18px; background: #a0a0a0; border: 1px solid #161616; padding-left: 4px; }
.search .tri { background: #222; }
.tlicons { display: flex; flex: 0 0 229px; padding-left: 12px; gap: 4px; }
.tlicons svg { width: 23px; height: 18px; } .tlicons .wide { margin-left: 7px; } .tlicons svg:nth-child(2) { margin-left: 8px; }
.layers { width: 100%; table-layout: fixed; border-collapse: collapse; }
.c-sw { width: 70px; } .c-lab { width: 32px; } .c-nr { width: 31px; } .c-mode { width: 105px; } .c-t { width: 19px; } .c-mas { width: 104px; } .c-par { width: 55px; }
.layers th, .layers td { padding: 0; text-align: left; overflow: hidden; white-space: nowrap; }
.layers thead tr { height: 19px; background: linear-gradient(#494949, #3a3a3a); border: 1px solid #1c1c1c; border-width: 1px 0; }
.layers th { font-size: 9px; font-weight: normal; padding-left: 4px; }
.layers tbody tr { height: 17px; background: linear-gradient(#383838 16px, #444 16px); }
.layers tbody tr.seld { background: #505050; }
.layers td:nth-child(3) { font-weight: bold; padding-left: 6px; }
.sw { display: grid; grid-template-columns: 15px 15px 15px 15px; align-items: center; padding-left: 5px; height: 16px; }
th .sw { padding-left: 2px; }
.cell { display: block; width: 13px; height: 13px; border: 1px solid #2a2a2a; border-bottom-color: #888; }
td > .cell { margin-left: 3px; }
.lab { display: flex; align-items: center; gap: 6px; padding-left: 5px; }
.tag { margin-left: 8px; }
.name { display: flex; align-items: center; gap: 4px; padding-left: 3px; height: 17px; font-weight: bold; color: #ccc; }
.name svg { width: 13px; } .orange { width: 13px; height: 13px; background: #ff9800; border: 1px solid #111; }
.tt { width: 13px; font: bold 12px "Liberation Serif", serif; color: #111; text-align: center; }
.nm { padding-left: 2px; flex: 1; line-height: 13px; } .edit { border: 2px solid #bcbcbc; padding-left: 1px; margin: 0 1px 0 -1px; }
.layers .sel { margin: 0 2px 0 4px; } .layers .sel select { height: 15px; line-height: 13px; padding-left: 5px; } .layers .sel::before { top: 3px; bottom: 3px; } .layers .sel::after { top: 5px; }
.layers .mas { margin: 0 6px 0 3px; }
.par { display: flex; gap: 6px; align-items: center; padding-left: 5px; } .ohne { border: 1px solid #161616; padding-left: 6px; line-height: 13px; flex: 1; background: #444; }
.tlfoot { margin-top: auto; display: flex; align-items: center; gap: 4px; height: 20px; border-top: 1px solid #222; padding-left: 6px; flex: none; }
.darkbox { background: #181818; padding: 0 1px; }
.toggle { margin-left: auto; margin-right: 57px; width: 223px; height: 14px; line-height: 12px; font-size: 10px; border: 1px solid #161616; background: linear-gradient(#505050, #404040); color: #ccc; }
.tlside { width: 17px; display: flex; flex-direction: column; align-items: center; padding-top: 37px; border-left: 1px solid #222; }
.tlside .shp { margin: 7px 0 3px; } .tlside .scroll { flex: 1; margin-bottom: 19px; width: 16px; }
.mark { position: absolute; left: 57px; top: 68px; display: flex; align-items: flex-end; opacity: .85; pointer-events: none; }
.mark span { font: bold 21px "DejaVu Sans Condensed", sans-serif; color: #aaa; line-height: 22px; margin-left: -9px; }

.absatz { padding: 6px 4px 0 7px; }
.aligns { display: flex; height: 28px; border-bottom: 1px solid #262626; gap: 5px; }
.aligns button { width: 20px; height: 21px; display: grid; place-items: center; color: #ccc; }
.aligns svg { width: 15px; height: 14px; } .aligns .on { background: #2c2c2c; border: 1px solid #111; } .aligns .dis { color: #666; } .aligns .sp { margin-left: 5px; }
.indents { display: grid; grid-template-columns: 73px 68px 60px; grid-auto-rows: 18px; padding-top: 1px; white-space: nowrap; font-size: 10px; }
.indents span { display: flex; align-items: center; gap: 3px; } .indents svg { width: 18px; height: 12px; }

/* File manager */
.cmd { min-width: 0; overflow: hidden; background: #f0f0f0; display: flex; flex-direction: column; }
.cmd h2 { font-size: 14px; line-height: 23px; height: 24px; color: #444; border-bottom: 1px solid #a0a0a0; white-space: nowrap; flex: none; }
.bar { height: 25px; border-bottom: 1px solid #a0a0a0; flex: none; }
.paths { display: flex; align-items: center; height: 24px; padding-top: 2px; flex: none; }
.gb { display: flex; align-items: center; gap: 4px; width: 34px; height: 19px; padding-left: 4px; background: #c0cbd8; }
.drive { margin: 0 6px 0 7px; }
.path { flex: 1; height: 19px; line-height: 18px; padding-left: 3px; background: #b9c8d8; border-left: 1px solid #999; white-space: nowrap; overflow: hidden; font-size: 12px; font-family: "Noto Sans", sans-serif; }
.path { font-size: 11px; }
.lists { flex: 1; display: grid; grid-template-columns: 19px 16px 1fr; background: #fff; border-top: 1px solid #aaa; }
.lhead { height: 19px; background: #f0f0f0; border-bottom: 1px solid #aaa; }
.lscroll { background: #eee; display: flex; justify-content: center; padding-top: 6px; }
.files { margin-left: 4px; border-left: 1px solid #999; overflow: hidden; }
.files table { width: 100%; min-width: 318px; table-layout: fixed; border-collapse: collapse; }
.f-name { width: 165px; } .f-size { width: 58px; } .f-date { width: 64px; }
.files th { height: 19px; padding: 0 0 0 3px; font-weight: normal; text-align: left; background: #f0f0f0; border-bottom: 1px solid #aaa; border-right: 1px solid #aaa; line-height: 17px; white-space: nowrap; }
.files td { height: 19px; padding: 0 5px 0 0; text-align: right; white-space: nowrap; }
.files td:first-child { text-align: left; } .files td:nth-child(3) { padding-right: 4px; } .files td:nth-child(4) { text-align: left; padding: 0 0 0 5px; }
.sorted { display: flex; align-items: center; gap: 11px; }
.erw { display: grid; grid-template-columns: 56px 1fr; }
.fn { display: flex; align-items: center; gap: 4px; padding-left: 3px; } .fn.up { padding-left: 0; }

/* Context menus */
.popup { position: absolute; left: 899px; top: 278px; width: 332px; padding: 2px; background: linear-gradient(90deg, #f0f0f0 30px, #d5d5d5 30px 31px, #f0f0f0 31px); border: 1px solid #979797; box-shadow: 3px 3px 2px rgba(0,0,0,.35); }
.popup button { position: relative; display: block; width: 100%; height: 22px; line-height: 22px; padding-left: 32px; text-align: left; color: #111; }
.popup button:disabled { color: #7a7a7a; }
.popup hr { height: 1px; margin: 3px 0 3px 28px; border: 0; background: #d0d0d0; }
.popup .hl { background: #cfe2f3; box-shadow: inset 0 0 0 1px #84b3d8; }
.popup .hl .tri { position: absolute; right: 9px; top: 7px; width: 5px; background: #222; }
.tick { position: absolute; left: 0; top: 0; width: 22px; height: 22px; display: grid; place-items: center; background: #b5dff0; border: 1px solid #3c9fc6; }
.popup.sub { left: 1225px; top: 592px; }
.sub .tick { background: #a3d0f0; }
```
